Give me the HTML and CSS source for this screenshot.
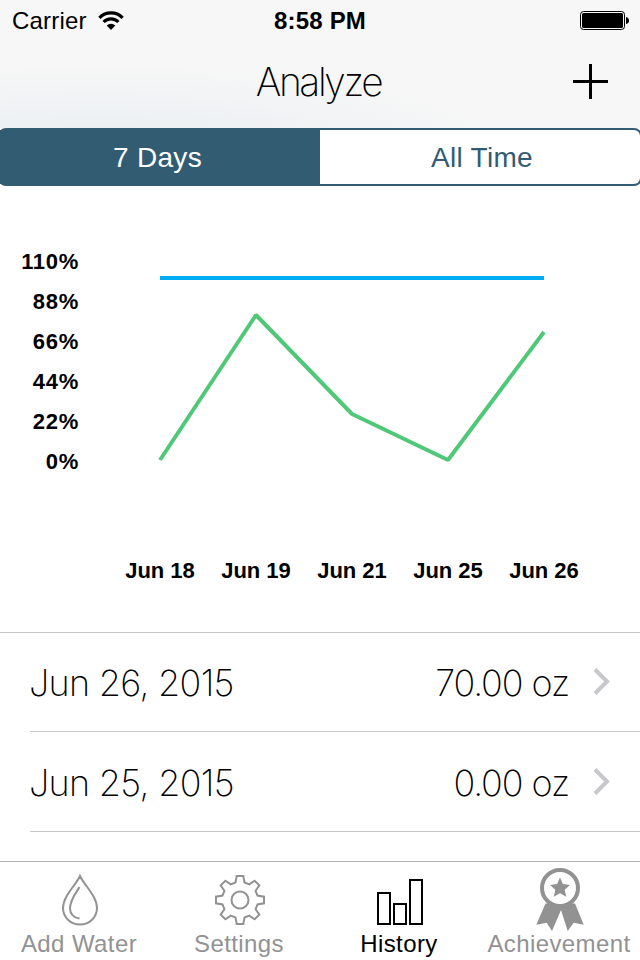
FILE: index.html
```html
<!DOCTYPE html>
<html lang="en">

<head>
    <meta charset="UTF-8">
    <meta name="viewport" content="width=device-width, initial-scale=1.0">
    <title>Analyze</title>
    <link rel="stylesheet" href="styles.css">
</head>

<body>
    <header>
        <div class="status-bar">
            <div class="carrier">
                <span>Carrier</span>
                <svg width="26" height="20" viewBox="0 0 26 20">
                    <path d="M1.4 6.8a16 16 0 0 1 23.2 0M5.6 11a10.3 10.3 0 0 1 14.8 0" fill="none" stroke="#000" stroke-width="3.2" />
                    <path d="M13 19l-4.3-4.4a6.2 6.2 0 0 1 8.6 0z" />
                </svg>
            </div>
            <span class="time">8:58 PM</span>
            <svg class="battery" width="50" height="20" viewBox="0 0 50 20">
                <rect x="0.5" y="0.5" width="44" height="18" rx="3" fill="none" stroke="#000" />
                <rect x="2" y="2" width="41" height="15" rx="1.5" />
                <path d="M46 6q3 .5 3 3.5t-3 3.5z" />
            </svg>
        </div>
        <div class="nav-bar">
            <h1>Analyze</h1>
            <svg class="add" width="36" height="36" viewBox="0 0 36 36">
                <path d="M0 18.500h35M17.500 1v35" stroke="#000" stroke-width="3" />
            </svg>
        </div>
    </header>

    <div class="segments">
        <div class="segment active">7 Days</div>
        <div class="segment">All Time</div>
    </div>

    <section class="chart">
        <div class="plot">
            <ul class="y-axis">
                <li>110%</li>
                <li>88%</li>
                <li>66%</li>
                <li>44%</li>
                <li>22%</li>
                <li>0%</li>
            </ul>
            <svg width="400" height="240" viewBox="0 0 400 240">
                <path d="M8 36h384" stroke="#00adf5" stroke-width="4" />
                <polyline points="8,218 104,73 200,172 296,218 392,90" fill="none" stroke="#50c878" stroke-width="4" stroke-linejoin="bevel" />
            </svg>
        </div>
        <ul class="x-axis">
            <li>Jun 18</li>
            <li>Jun 19</li>
            <li>Jun 21</li>
            <li>Jun 25</li>
            <li>Jun 26</li>
        </ul>
    </section>

    <ul class="history">
        <li>
            <span class="date">Jun 26, 2015</span>
            <span class="amount">70.00 oz</span>
            <svg width="17" height="27" viewBox="0 0 17 27"><path d="M2 1.5l12 12-12 12" fill="none" stroke="#c7c7cc" stroke-width="4" /></svg>
        </li>
        <li>
            <span class="date">Jun 25, 2015</span>
            <span class="amount">0.00 oz</span>
            <svg width="17" height="27" viewBox="0 0 17 27"><path d="M2 1.5l12 12-12 12" fill="none" stroke="#c7c7cc" stroke-width="4" /></svg>
        </li>
    </ul>

    <nav>
        <div class="tab">
            <svg width="66" height="66" viewBox="-33 -33 66 66" fill="none" stroke="#929292" stroke-width="2">
                <path d="M0-24C-4-15-17-4-17 8A17 16.5 0 0 0 17 8C17-4 4-15 0-24z" />
                <path d="M-.5-13C-4-7-10 0-10 8.500C-10 14-6 18-.5 18.500" />
            </svg>
            <span>Add Water</span>
        </div>
        <div class="tab">
            <svg width="66" height="66" viewBox="-33 -33 66 66" fill="none" stroke="#929292" stroke-width="2">
                <path d="M-3.300-24H3.300L4.500-17.500 9.200-15.600 14.600-19.300 19.300-14.600 15.600-9.200 17.500-4.500 24-3.300V3.300L17.500 4.500 15.600 9.200 19.300 14.600 14.600 19.300 9.200 15.600 4.500 17.500 3.300 24H-3.300L-4.500 17.500-9.200 15.600-14.600 19.300-19.300 14.600-15.600 9.200-17.500 4.500-24 3.300V-3.300L-17.500-4.500-15.600-9.200-19.300-14.600-14.600-19.300-9.200-15.600-4.500-17.500z" />
                <circle r="8.500" />
            </svg>
            <span>Settings</span>
        </div>
        <div class="tab active">
            <svg width="66" height="66" viewBox="-33 -33 66 66" fill="none" stroke="#000" stroke-width="2">
                <path d="M-22-7h12v31h-12zM-6 4h12v20h-12zM10-20h12v44h-12z" />
            </svg>
            <span>History</span>
        </div>
        <div class="tab">
            <svg width="66" height="66" viewBox="-33 -33 66 66" fill="#929292">
                <path d="M-14.500 3.500L-23.700 24.700-13.300 22.700-8 31 1 10 7.700 31 13.700 22.700 23.700 24.700 15 3.500z" />
                <circle cy="-12" r="18" fill="#fff" stroke="#929292" stroke-width="4" />
                <path d="M0-22.500l2.900 6.600 7.100.8-5.300 4.800 1.500 7L0-6.800-6.200-3.300l1.500-7L-10-15.100l7.100-.8z" />
            </svg>
            <span>Achievement</span>
        </div>
    </nav>
</body>

</html>
```
FILE: styles.css
```css
body {
    font-family: "Liberation Sans", Arial, sans-serif;
    margin: 0;
    width: 640px;
    height: 960px;
    overflow: hidden;
    display: flex;
    flex-direction: column;
    background-color: #fff;
    color: #000;
}

ul {
    list-style-type: none;
    margin: 0;
    padding: 0;
}

svg {
    display: block;
    flex-shrink: 0;
}

header {
    height: 128px;
    background: radial-gradient(ellipse 420px 75px at 100px 140px, #e9eef2, rgba(247, 247, 247, 0)), #f7f7f7;
}

.status-bar {
    height: 40px;
    padding: 0 10px 0 12px;
    display: grid;
    grid-template-columns: 1fr auto 1fr;
    align-items: center;
    font-size: 24px;
}

.carrier {
    display: flex;
    align-items: center;
    gap: 11px;
    padding-top: 2px;
    letter-spacing: 0.2px;
}

.time {
    font-weight: bold;
    letter-spacing: 0.2px;
    padding: 2px 2px 0 0;
}

.battery {
    justify-self: end;
    margin-top: 2px;
}

.nav-bar {
    height: 88px;
    padding: 0 31px 0 32px;
    display: grid;
    grid-template-columns: 1fr auto 1fr;
    align-items: center;
}

.nav-bar h1 {
    grid-column: 2;
    margin: -5px 0 0;
    padding-right: 4px;
    font-family: Inter, sans-serif;
    font-size: 39px;
    font-weight: 200;
    letter-spacing: -2.4px;
}

.add {
    justify-self: end;
    margin-top: -6px;
}

.segments {
    height: 54px;
    margin: 0 -2px;
    border: 2px solid #325c72;
    border-radius: 8px;
    background-color: #325c72;
    display: flex;
    flex-shrink: 0;
}

.segment {
    width: 50%;
    box-sizing: border-box;
    display: flex;
    align-items: center;
    justify-content: center;
    padding: 1px 0 0 4px;
    border-radius: 0 6px 6px 0;
    font-size: 28px;
    letter-spacing: 0.3px;
    color: #325c72;
    background-color: #fff;
}

.segment.active {
    padding: 1px 5px 0 0;
    border-radius: 0;
    background-color: #325c72;
    color: #fff;
}

.chart {
    height: 390px;
    padding-top: 56px;
    box-sizing: border-box;
    font-size: 22px;
    font-weight: bold;
}

.plot {
    display: flex;
    gap: 73px;
}

.y-axis {
    width: 79px;
    text-align: right;
    line-height: 40px;
    letter-spacing: 0.7px;
}

.x-axis {
    display: flex;
    padding: 71px 0 0 112px;
    line-height: 36px;
}

.x-axis li {
    width: 96px;
    text-align: center;
}

.history {
    margin-top: 56px;
    flex: 1;
    border-top: 1px solid #c8c7cc;
    font-family: Inter, sans-serif;
    font-size: 36px;
    font-weight: 200;
}

.history li {
    height: 98px;
    margin-left: 30px;
    padding-right: 30px;
    display: flex;
    align-items: center;
    border-bottom: 1px solid #c8c7cc;
}

.history li + li {
    height: 97px;
    padding-top: 2px;
}

.history svg {
    margin-top: -2px;
}

.date {
    flex: 1;
    margin-left: -1px;
    padding-top: 1px;
    letter-spacing: -0.7px;
}

.amount {
    margin-right: 24px;
    padding-top: 1px;
    letter-spacing: -1.1px;
}

nav {
    height: 98px;
    border-top: 1px solid #b2b2b2;
    display: flex;
    flex-shrink: 0;
}

.tab {
    width: 160px;
    padding-top: 5px;
    display: flex;
    flex-direction: column;
    align-items: center;
    font-size: 24px;
    line-height: 22px;
    letter-spacing: 0.4px;
    color: #929292;
}

.tab span {
    margin-right: 2px;
}

.tab.active {
    color: #000;
}
```
